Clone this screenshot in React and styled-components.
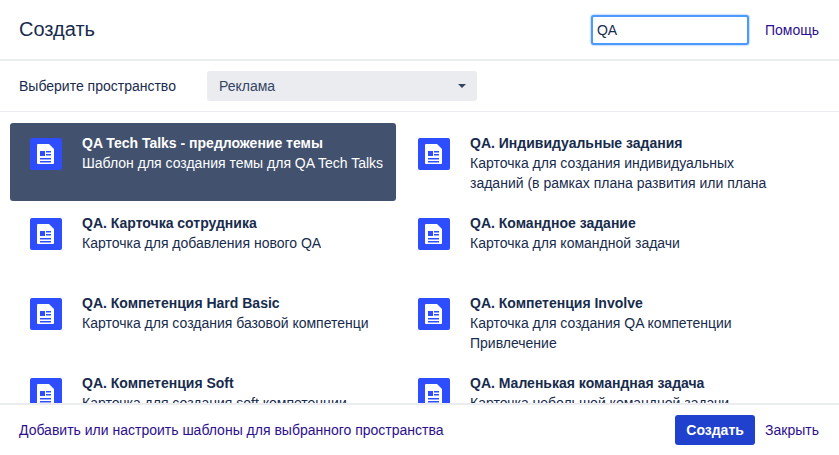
import React from 'react';
import styled, { createGlobalStyle } from 'styled-components';

const Global = createGlobalStyle`
    html, body { margin: 0; padding: 0; background: #fff; }
    body { font-family: "Liberation Sans", Arial, sans-serif; color: #172b4d; }
`;

const Dialog = styled.div`
    width: 839px;
    height: 455px;
    display: flex;
    flex-direction: column;
    overflow: hidden;
`;

const Header = styled.header`
    height: 59px;
    flex: none;
    display: flex;
    align-items: center;
    padding: 0 20px 0 19px;
    border-bottom: 2px solid #ebecf0;
`;

const Title = styled.h1`
    flex: 1;
    margin: 0;
    font-size: 20px;
    font-weight: 500;
    color: #172b4d;
`;

const Search = styled.input`
    width: 158px;
    height: 30px;
    box-sizing: border-box;
    padding: 0 4px;
    margin-right: 16px;
    border: 2px solid #4c9aff;
    border-radius: 3px;
    box-shadow: 0 0 2px #4c9aff;
    outline: none;
    font: 14px "Liberation Sans", Arial, sans-serif;
    color: #172b4d;
`;

const Link = styled.a`
    font-size: 14px;
    color: #2c0f91;
`;

const SpaceRow = styled.div`
    height: 50px;
    flex: none;
    display: flex;
    align-items: center;
    padding-left: 19px;
    border-bottom: 1px solid #ebecf0;
    font-size: 14px;
`;

const SpaceLabel = styled.span`
    width: 188px;
`;

const Select = styled.div`
    width: 270px;
    height: 30px;
    box-sizing: border-box;
    display: flex;
    align-items: center;
    justify-content: space-between;
    padding: 0 11px 0 12px;
    background: #ebecf0;
    border-radius: 3px;
    color: #344563;
`;

const Caret = styled.span`
    width: 0;
    height: 0;
    border-left: 4px solid transparent;
    border-right: 4px solid transparent;
    border-top: 4px solid #344563;
`;

const List = styled.div`
    flex: 1;
    min-height: 0;
    overflow: hidden;
    display: grid;
    grid-template-columns: 388px 388px;
    grid-auto-rows: 78px;
    row-gap: 2px;
    padding: 11px 0 0 10px;
`;

const Card = styled.div`
    display: flex;
    gap: 20px;
    padding: 10px 0 0 20px;
    box-sizing: border-box;
    width: 386px;
    border-radius: 3px;
    background: ${p => (p.$selected ? '#42526e' : 'transparent')};
    color: ${p => (p.$selected ? '#fff' : '#172b4d')};
`;

const CardIcon = styled.svg`
    width: 32px;
    height: 32px;
    margin-top: 5px;
    flex: none;
`;

const CardText = styled.div`
    min-width: 0;
    font-size: 14px;
    line-height: 20px;
`;

const CardTitle = styled.div`
    font-weight: 700;
`;

const CardDesc = styled.div`
    max-height: 40px;
    overflow: hidden;
`;

const Footer = styled.footer`
    height: 50px;
    flex: none;
    display: flex;
    align-items: center;
    padding: 0 20px 0 19px;
    background: #fff;
    border-top: 2px solid #ebecf0;
`;

const FooterLink = styled(Link)`
    flex: 1;
`;

const CreateButton = styled.button`
    width: 80px;
    height: 30px;
    margin-right: 10px;
    border: 0;
    border-radius: 3px;
    background: #1f41ce;
    color: #fff;
    font: 700 14px "Liberation Sans", Arial, sans-serif;
`;

const templates = [
    { title: 'QA Tech Talks - предложение темы', desc: 'Шаблон для создания темы для QA Tech Talks', selected: true },
    { title: 'QA. Индивидуальные задания', desc: 'Карточка для создания индивидуальных заданий (в рамках плана развития или плана индивидуальной работы)' },
    { title: 'QA. Карточка сотрудника', desc: 'Карточка для добавления нового QA' },
    { title: 'QA. Командное задание', desc: 'Карточка для командной задачи' },
    { title: 'QA. Компетенция Hard Basic', desc: 'Карточка для создания базовой компетенци' },
    { title: 'QA. Компетенция Involve', desc: 'Карточка для создания QA компетенции Привлечение' },
    { title: 'QA. Компетенция Soft', desc: 'Карточка для создания soft компетенции' },
    { title: 'QA. Маленькая командная задача', desc: 'Карточка небольшой командной задачи' },
];

function DocIcon() {
    return (
        <CardIcon viewBox="0 0 32 32">
            <rect width="32" height="32" rx="2" fill="#2e4dff" />
            <path d="M8 6h11l5 5v14a1 1 0 0 1-1 1H8a1 1 0 0 1-1-1V7a1 1 0 0 1 1-1z" fill="#fff" />
            <path d="M10 13h5v5h-5zM16 13h5v1.5h-5zM16 16h5v1.5h-5zM10 20h11v1.5H10zM10 23h11v1.5H10z" fill="#2e4dff" />
        </CardIcon>
    );
}

export default function App() {
    return (
        <Dialog>
            <Global />
            <Header>
                <Title>Создать</Title>
                <Search defaultValue="QA" />
                <Link>Помощь</Link>
            </Header>
            <SpaceRow>
                <SpaceLabel>Выберите пространство</SpaceLabel>
                <Select>
                    Реклама
                    <Caret />
                </Select>
            </SpaceRow>
            <List>
                {templates.map(item => (
                    <Card key={item.title} $selected={item.selected}>
                        <DocIcon />
                        <CardText>
                            <CardTitle>{item.title}</CardTitle>
                            <CardDesc>{item.desc}</CardDesc>
                        </CardText>
                    </Card>
                ))}
            </List>
            <Footer>
                <FooterLink>Добавить или настроить шаблоны для выбранного пространства</FooterLink>
                <CreateButton>Создать</CreateButton>
                <Link>Закрыть</Link>
            </Footer>
        </Dialog>
    );
}
